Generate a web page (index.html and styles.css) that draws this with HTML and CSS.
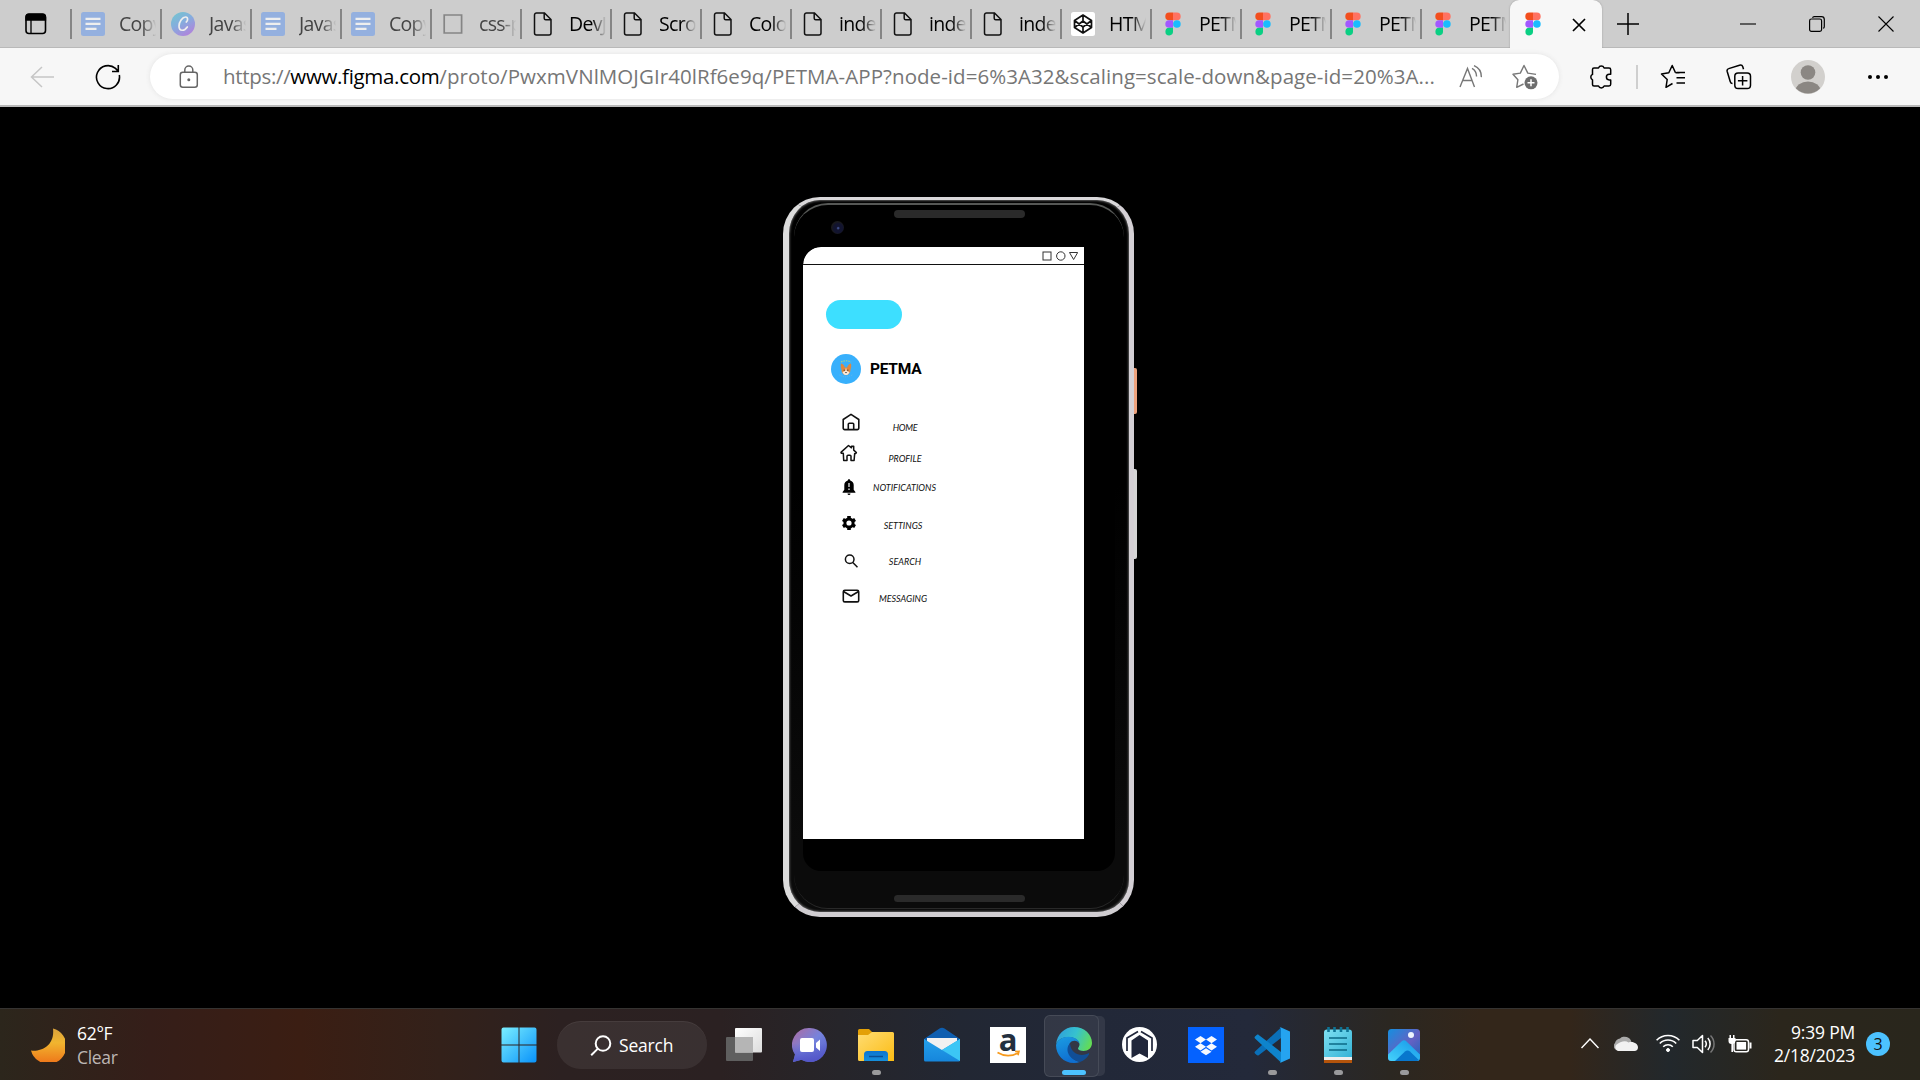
FILE: index.html
```html
<!DOCTYPE html>
<html lang="en">
<head>
<meta charset="utf-8">
<title>PETMA-APP</title>
<link rel="stylesheet" href="styles.css">
</head>
<body>
<svg class="defs" aria-hidden="true">
  <defs>
    <linearGradient id="canvaG" x1="0" y1="0" x2="0.6" y2="1"><stop offset="0" stop-color="#72c8cd"/><stop offset=".5" stop-color="#84aedd"/><stop offset="1" stop-color="#ad86dc"/></linearGradient>
    <linearGradient id="moonG" x1="0" y1="0" x2="0" y2="1"><stop offset="0" stop-color="#d9a23c"/><stop offset=".4" stop-color="#f1b52f"/><stop offset="1" stop-color="#ee7419"/></linearGradient>
    <linearGradient id="winG" gradientUnits="userSpaceOnUse" x1="0" y1="0" x2="35" y2="35"><stop offset="0" stop-color="#7cf0ff"/><stop offset="1" stop-color="#0a93fa"/></linearGradient>
    <linearGradient id="tvG" x1="0" y1="0" x2="1" y2="1"><stop offset="0" stop-color="#fff"/><stop offset="1" stop-color="#dcdcdc"/></linearGradient>
    <linearGradient id="chatG" x1="0" y1="0" x2="1" y2="1"><stop offset="0" stop-color="#b06b9f"/><stop offset=".5" stop-color="#7583dd"/><stop offset="1" stop-color="#4f57c8"/></linearGradient>
    <linearGradient id="chatH" x1="0" y1="0" x2="0" y2="1"><stop offset=".45" stop-color="#5558c9" stop-opacity="0"/><stop offset="1" stop-color="#5355c8"/></linearGradient>
    <linearGradient id="foldG" x1="0" y1="0" x2="1" y2="1"><stop offset="0" stop-color="#ffdc72"/><stop offset="1" stop-color="#fbbc14"/></linearGradient>
    <linearGradient id="foldB" x1="0" y1="0" x2="0" y2="1"><stop offset="0" stop-color="#0c74cf"/><stop offset="1" stop-color="#1690dc"/></linearGradient>
    <linearGradient id="mailG" x1="0" y1="0" x2="0" y2="1"><stop offset="0" stop-color="#24a0ea"/><stop offset="1" stop-color="#1686dc"/></linearGradient>
    <linearGradient id="edgeA" x1="0" y1=".3" x2="1" y2=".6"><stop offset="0" stop-color="#2f9fdb"/><stop offset=".5" stop-color="#36c2cf"/><stop offset="1" stop-color="#63dc55"/></linearGradient>
    <linearGradient id="edgeB" x1="0" y1="0" x2=".3" y2="1"><stop offset="0" stop-color="#1b9de2"/><stop offset="1" stop-color="#0f6fd0"/></linearGradient>
    <linearGradient id="noteG" x1="0" y1="0" x2="1" y2="1"><stop offset="0" stop-color="#7fe0f2"/><stop offset="1" stop-color="#35b3d6"/></linearGradient>
    <linearGradient id="photoG" x1="0" y1="0" x2="1" y2="1"><stop offset="0" stop-color="#148fe0"/><stop offset=".55" stop-color="#6561c2"/><stop offset="1" stop-color="#1665bd"/></linearGradient>
    <linearGradient id="photoM" x1="0" y1="1" x2="1" y2="0"><stop offset="0" stop-color="#45d2fb"/><stop offset="1" stop-color="#1596e8"/></linearGradient>
    <symbol id="doc" viewBox="0 0 24 24"><rect width="24" height="24" rx="2.5" fill="#94b0df"/><path d="M4.500 6.500h15M4.500 11.500h15M4.500 16.500h11" transform="translate(0 .3)" stroke="#eee" stroke-width="2.200"/></symbol>
    <symbol id="canva" viewBox="0 0 24 24"><circle cx="12" cy="12" r="12" fill="url(#canvaG)"/><path d="M15.300 10c1.600-1 2-4.900-.6-5-3.400-.1-6.700 5-6.700 9 0 5.800 5.500 5.200 8.300 1" fill="none" stroke="#eee" stroke-width="1.700" stroke-linecap="round"/></symbol>
    <symbol id="box" viewBox="0 0 24 24"><path d="M3.200 3h17.400v18H3.200z" fill="none" stroke="#858585" stroke-width="1.700"/></symbol>
    <symbol id="page" viewBox="0 0 24 24"><path d="M5.500 1h8l6.500 6.500V21a2 2 0 0 1-2 2H5.500a2 2 0 0 1-2-2V3a2 2 0 0 1 2-2zM13.200 1v5.300a1.500 1.500 0 0 0 1.500 1.500H20" fill="none" stroke="#111" stroke-width="1.500"/></symbol>
    <symbol id="codepen" viewBox="0 0 24 24"><rect width="24" height="24" rx="2.500" fill="#fff"/><path d="M12 3l8.500 5.500v7L12 21l-8.500-5.500v-7zM12 3v6M12 15v6M3.500 8.500L12 15l8.500-6.500M3.500 15.500L12 9l8.500 6.500" fill="none" stroke="#111" stroke-width="1.700" stroke-linejoin="round"/></symbol>
    <symbol id="figma" viewBox="0 0 24 24"><path d="M4.300.6H12v7.600H8.100a3.800 3.800 0 0 1 0-7.600z" fill="#f24e1e"/><path d="M12 .6h3.900a3.800 3.800 0 0 1 0 7.600H12z" fill="#ff7262"/><path d="M12 8.200H8.100a3.800 3.800 0 0 0 0 7.600H12z" fill="#a259ff"/><circle cx="15.900" cy="12" r="3.800" fill="#1abcfe"/><path d="M8.100 15.800H12v3.800a3.800 3.800 0 1 1-3.900-3.800z" fill="#0acf83"/></symbol>
  </defs>
</svg>

<div class="browser">
  <header class="tabstrip">
    <svg class="workspace" viewBox="0 0 22 22"><rect x="1" y="1.500" width="19.500" height="19" rx="3" fill="none" stroke="#000" stroke-width="1.600"/><path d="M1 7V4a3 3 0 0 1 3-3h13.500a3 3 0 0 1 3 3v3zM6 6v14" stroke="#000" stroke-width="1.300"/></svg>
    <nav class="tabs">
      <div class="tab asleep"><svg><use href="#doc"/></svg><span>Copy</span></div>
      <div class="tab asleep"><svg><use href="#canva"/></svg><span>Javas</span></div>
      <div class="tab asleep"><svg><use href="#doc"/></svg><span>Javas</span></div>
      <div class="tab asleep"><svg><use href="#doc"/></svg><span>Copy</span></div>
      <div class="tab asleep"><svg><use href="#box"/></svg><span>css-p</span></div>
      <div class="tab"><svg><use href="#page"/></svg><span>DevJ</span></div>
      <div class="tab"><svg><use href="#page"/></svg><span>Scro</span></div>
      <div class="tab"><svg><use href="#page"/></svg><span>Colo</span></div>
      <div class="tab"><svg><use href="#page"/></svg><span>inde</span></div>
      <div class="tab"><svg><use href="#page"/></svg><span>inde</span></div>
      <div class="tab"><svg><use href="#page"/></svg><span>inde</span></div>
      <div class="tab"><svg><use href="#codepen"/></svg><span>HTM</span></div>
      <div class="tab"><svg><use href="#figma"/></svg><span>PETM</span></div>
      <div class="tab"><svg><use href="#figma"/></svg><span>PETM</span></div>
      <div class="tab"><svg><use href="#figma"/></svg><span>PETM</span></div>
      <div class="tab"><svg><use href="#figma"/></svg><span>PETM</span></div>
      <div class="tab active"><svg><use href="#figma"/></svg><svg class="close" viewBox="0 0 14 14"><path d="M1 1l12 12M13 1L1 13" stroke="#000" stroke-width="1.700"/></svg></div>
    </nav>
    <svg class="newtab" viewBox="0 0 22 22"><path d="M11 0v22M0 11h22" stroke="#000" stroke-width="1.500"/></svg>
    <div class="winbtns">
      <svg viewBox="0 0 16 16"><path d="M0 8h16" stroke="#000" stroke-width="1.100"/></svg>
      <svg viewBox="0 0 16 16"><rect x=".6" y="3" width="12" height="12.300" rx="1.800" fill="none" stroke="#000" stroke-width="1.200"/><path d="M3.500 1.800c.3-.8 1-1.200 1.700-1.200h7.300a2.800 2.800 0 0 1 2.800 2.800v7.200c0 .8-.4 1.500-1 1.800" fill="none" stroke="#000" stroke-width="1.200"/></svg>
      <svg viewBox="0 0 16 16"><path d="M.5.500l15 15M15.500.5l-15 15" stroke="#000" stroke-width="1.100"/></svg>
    </div>
  </header>
  <div class="toolbar">
    <svg class="back" viewBox="0 0 24 22"><path d="M12 1L1.500 11 12 21M1.500 11H24" fill="none" stroke="#c6c6c6" stroke-width="1.500"/></svg>
    <svg class="reload" viewBox="0 0 26 26"><path d="M24.300 11A11.500 11.500 0 1 1 20.500 4.400L23 7M23.300 1v6.500H17" fill="none" stroke="#000" stroke-width="1.600"/></svg>
    <div class="address">
      <svg class="lock" viewBox="0 0 20 24"><rect x="1.300" y="7.300" width="17" height="15" rx="2.500" fill="none" stroke="#666" stroke-width="1.500"/><path d="M5.800 7V5a4 4 0 0 1 8 0v2" fill="none" stroke="#666" stroke-width="1.500"/><circle cx="9.800" cy="14.800" r="1.500" fill="#666"/></svg>
      <div class="url"><span class="host">https://<b>www.figma.com</b></span>/proto/PwxmVNlMOJGIr40lRf6e9q/PETMA-APP?node-id=6%3A32&amp;scaling=scale-down&amp;page-id=20%3A...</div>
      <svg class="read" viewBox="0 0 24 24" fill="none" stroke="#777" stroke-width="1.400"><path d="M1 22L8.500 3.500 15.500 22M3.500 15.500h9.800M13 3.300a9 9 0 0 1 4.500 8.200M15 .6a12 12 0 0 1 7.300 11.500"/></svg>
      <svg class="addfav" viewBox="0 0 26 26"><path d="M11.500 20l-6.800 3.300 1.200-7.600L1 10.200l7.300-1.100L12 1.500l3.800 7.600 8.200 1.300" fill="none" stroke="#777" stroke-width="1.400" stroke-linejoin="round"/><circle cx="19" cy="18.800" r="6.500" fill="#6d6d6d"/><path d="M19 15.300v7M15.500 18.800h7" stroke="#fff" stroke-width="1.500"/></svg>
    </div>
    <div class="tools">
      <svg class="t-puzzle" viewBox="0 0 24 26"><path d="M5 4H9.500a3 3 0 0 1 5.600 0H20a1.700 1.700 0 0 1 1.700 1.700v4.600h-1.500a2.800 2.800 0 0 0 0 5.600h1.500v4.400a1.700 1.700 0 0 1-1.700 1.700h-4.900a3 3 0 0 1-5.600 0H5a1.500 1.500 0 0 1-1.500-1.500v-4.700a3 3 0 0 1 0-5.400V5.500A1.500 1.500 0 0 1 5 4z" fill="none" stroke="#000" stroke-width="1.500" stroke-linejoin="round"/></svg>
      <i class="divider"></i>
      <svg class="t-fav" viewBox="0 0 26 26"><path d="M12.500 19.500L6 23.300l1.200-7.800L1.500 10l7.300-1.200L12.200 1.500l3.300 7.300M15.500 8.800h4M16.500 8.500h8.500M16.500 13.800h8.500M16.500 19h8.500" fill="none" stroke="#000" stroke-width="1.500" stroke-linejoin="round"/></svg>
      <svg class="t-col" viewBox="0 0 26 26"><path d="M6.500 19.500c-1.200 0-1.900-.7-2.200-1.700L1.200 7.500C.8 6 1.300 5 2.700 4.600L13.500 1.200c1.700-.5 2.800.2 3.300 1.500l.7 2.500" fill="none" stroke="#000" stroke-width="1.500"/><rect x="8.800" y="9" width="15.700" height="15.500" rx="3.300" fill="none" stroke="#000" stroke-width="1.500"/><path d="M16.600 12v9.500M11.900 16.800h9.500" stroke="#000" stroke-width="1.500"/></svg>
      <svg class="t-user" viewBox="0 0 34 34"><clipPath id="uc"><circle cx="17" cy="17" r="16.500"/></clipPath><circle cx="17" cy="17" r="17" fill="#d2d0cd"/><circle cx="17" cy="12.500" r="7.300" fill="#8b8783"/><ellipse cx="17" cy="30.500" rx="12.500" ry="9" fill="#8b8783" clip-path="url(#uc)"/></svg>
      <svg class="t-more" viewBox="0 0 22 6"><circle cx="3" cy="3" r="2" /><circle cx="11" cy="3" r="2"/><circle cx="19" cy="3" r="2"/></svg>
    </div>
  </div>
</div>

<main class="stage">
  <div class="phone">
    <i class="side power"></i><i class="side volume"></i>
    <div class="body">
      <i class="rim"></i>
      <i class="speaker top"></i><i class="speaker bottom"></i><i class="camera"></i>
      <div class="glass">
        <div class="screen">
          <div class="status"><svg viewBox="0 0 36 12" fill="none" stroke="#333" stroke-width="1"><rect x="1" y="2" width="8" height="8"/><circle cx="18.800" cy="6" r="4.200"/><path d="M27.500 2.500h8.200l-4.100 7z"/></svg></div>
          <div class="pill"></div>
          <div class="brand">
            <svg viewBox="0 0 30 30"><circle cx="15" cy="15" r="15" fill="#38b0fc"/><path d="M10 8Q15 5.500 20 8" fill="none" stroke="#a4cf8c" stroke-dasharray="1.500 1" stroke-width="1.200"/><path d="M8.500 21Q15 25 22 20.500" fill="none" stroke="#78b9df" stroke-dasharray="1 1" stroke-width=".7"/><path d="M10 9.600c2.200.6 3.300 2 3.900 4h2.200c.6-2 1.700-3.400 3.900-4 .5 2.200.2 4.500-.6 6.200.3 3-2 5.400-4.400 5.400s-4.700-2.400-4.400-5.400c-.8-1.700-1.100-4-.6-6.200z" fill="#df883f"/><path d="M15 13.500l.8 3.500 2.700 1c-.5 2.100-2 3.100-3.500 3.100s-3-1-3.500-3.100l2.700-1z" fill="#f8eadc"/><path d="M12.700 16.200h1M16.300 16.200h1M14.300 18.600h1.400" stroke="#332a26" stroke-width="1"/></svg>
            <span>PETMA</span>
          </div>
          <ul class="menu">
            <li class="m-home"><svg viewBox="0 0 18 18" fill="none" stroke="#111" stroke-width="1.600" stroke-linejoin="round"><path d="M1.200 6.500L9 1.300l7.800 5.200v8.600a1.500 1.500 0 0 1-1.500 1.500H2.700a1.500 1.500 0 0 1-1.500-1.500zM6.300 16.500v-5.300a1 1 0 0 1 1-1h3.400a1 1 0 0 1 1 1v5.300"/></svg><span>HOME</span></li>
            <li class="m-profile"><svg viewBox="0 0 18 18" fill="none" stroke="#111" stroke-width="1.500" stroke-linejoin="round"><path d="M3.300 9.300H1.600a.7.700 0 0 1-.4-1.200L8.500 1.500l3 2.300V2.300h2.200v3.800l2.700 2.400-.5.900h-1.200l-.6 7H11v-4.200a1 1 0 0 0-1-1H8a1 1 0 0 0-1 1v4.200H3.700z"/></svg><span>PROFILE</span></li>
            <li class="m-notifications"><svg viewBox="0 0 18 18"><path d="M9 1.200c.8 0 1.200.5 1.200 1.200 2.300.6 3.500 2.500 3.500 4.700v4.700l1.700 2.200v.8H2.600V14l1.700-2.200V7.100c0-2.200 1.200-4.100 3.500-4.700 0-.7.400-1.200 1.200-1.200zM7.500 15.500h3A1.500 1.500 0 0 1 9 17a1.500 1.500 0 0 1-1.500-1.500z"/><path d="M9 5v4M9 10.500v1.500" stroke="#fff" stroke-width="1.200"/></svg><span>NOTIFICATIONS</span></li>
            <li class="m-settings"><svg viewBox="0 0 18 18"><circle cx="9" cy="9" r="4.100" fill="none" stroke="#000" stroke-width="3"/><path d="M9 2v3M9 13v3M2.900 5.500l2.600 1.500M12.500 11l2.600 1.500M15.100 5.500L12.500 7M5.500 11l-2.600 1.500" stroke="#000" stroke-width="3.600"/></svg><span>SETTINGS</span></li>
            <li class="m-search"><svg viewBox="0 0 18 18" fill="none" stroke="#111" stroke-width="1.500"><circle cx="7.700" cy="7.300" r="4.300"/><path d="M10.800 10.500l4.700 4.700"/></svg><span>SEARCH</span></li>
            <li class="m-messaging"><svg viewBox="0 0 18 18" fill="none" stroke="#111" stroke-width="1.600" stroke-linejoin="round"><rect x="1.300" y="3.300" width="15.400" height="11.600" rx="1.500"/><path d="M1.500 4.500L9 9l7.500-4.500"/></svg><span>MESSAGING</span></li>
          </ul>
        </div>
      </div>
    </div>
  </div>
</main>

<footer class="taskbar">
  <div class="weather">
    <svg viewBox="0 0 34 34"><path d="M22 0.500a18 18 0 1 1-22 22c10 1.500 24-4.500 22-22z" fill="url(#moonG)"/></svg>
    <div><p>62°F</p><p class="dim">Clear</p></div>
  </div>
  <div class="apps">
    <div class="app start"><svg viewBox="0 0 36 36"><path d="M.5 2.500a2 2 0 0 1 2-2h15v17H.500zM18.500.5h15a2 2 0 0 1 2 2v15h-17zM.5 18.500h17v17h-15a2 2 0 0 1-2-2zM18.500 18.500h17v15a2 2 0 0 1-2 2h-15z" fill="url(#winG)"/></svg></div>
    <div class="search"><svg viewBox="0 0 22 22" fill="none" stroke="#fff" stroke-width="2"><circle cx="13" cy="8.500" r="7.300"/><path d="M7.600 13.900L1.200 20.300"/></svg><span>Search</span></div>
    <div class="app"><svg viewBox="0 0 36 36"><rect y="10" width="27" height="24" rx="1" fill="#5f5f5f"/><rect x="9" y="1" width="27" height="24.500" rx="1" fill="url(#tvG)"/><path d="M9 10h18v15.500H9z" fill="#b5b5b5"/></svg></div>
    <div class="app"><svg viewBox="0 0 36 36"><path d="M18 1a17 17 0 1 1-8.500 31.800L1 35l2-7.500A17 17 0 0 1 18 1z" fill="url(#chatG)"/><path d="M18 1a17 17 0 1 1-8.500 31.800L1 35l2-7.500A17 17 0 0 1 18 1z" fill="url(#chatH)"/><rect x="8" y="11" width="14" height="14" rx="2" fill="#fff"/><path d="M24 16l4-3.500v11.500L24 20.500z" fill="#fff"/></svg></div>
    <div class="app run"><svg viewBox="0 0 36 36"><path d="M0 8V3.500A1.500 1.500 0 0 1 1.500 2H11l4 4v4z" fill="#e3a007"/><path d="M0 8h10l4-3h20.500A1.500 1.500 0 0 1 36 6.500V34H1.500A1.500 1.500 0 0 1 0 32.500z" fill="url(#foldG)"/><path d="M6 34v-6.500A3.500 3.500 0 0 1 9.500 24h17a3.500 3.500 0 0 1 3.500 3.500V34z" fill="url(#foldB)"/><path d="M11 29.500h14" stroke="#0b4f94" stroke-width="1.500"/></svg></div>
    <div class="app"><svg viewBox="0 0 36 36"><path d="M0 12L15.500 1.500q2.500-1.500 5 0L36 12v8H0z" fill="#0e5eb0"/><path d="M3 11h30v8L18 26 3 19z" fill="#f1f1f1"/><path d="M0 12l18 11L36 12v21a1.500 1.500 0 0 1-1.500 1.500h-33A1.500 1.500 0 0 1 0 33z" fill="url(#mailG)"/><path d="M36 12L18 23l18 11z" fill="#3cc6f5"/></svg></div>
    <div class="app"><svg viewBox="0 0 36 36"><path d="M0 0h36v36H0z" fill="#fff"/><text x="18" y="23.500" text-anchor="middle" class="amz" fill="#232f3e">a</text><path d="M7.500 25.500q10 6 20.500.5M25 24.500l4-.2-1 4" fill="none" stroke="#f79a1c" stroke-width="1.600"/></svg></div>
    <div class="app tile"><svg viewBox="0 0 36 36"><path d="M0 17.500C1 7.500 8.500 0 18 0c10.500 0 18 7.500 18 16 0 5-4 8-8.500 8-3 0-5.500-1-5.500-2.500 0-1 1.500-2 1.500-4C23.500 13 18 10 12.500 10 6.500 10 1.500 13 0 17.500z" fill="url(#edgeA)"/><path d="M0 18C1.500 13 6.500 9.800 12.500 9.800c6 0 10.500 3 11 7-1-2-3-3-5-3-4 0-6 3.500-6 7C12.500 28 17.500 34 24 35a18 18 0 0 1-6 1C7.500 36 0 28 0 18z" fill="url(#edgeB)"/><path d="M14 16.500C9 21 11 32 24 35c4-1.500 7-4 9-7.500.5-1-.3-1.500-1-1-6 3.200-17 1.500-18-10z" fill="#114e96"/></svg></div>
    <div class="app"><svg viewBox="0 0 36 36"><circle cx="17.500" cy="17.500" r="17.500" fill="#fff"/><path d="M9.500 31V13.500L17.500 8l8.500 5.500V31l-8.500-4.500z" fill="#20263a"/><path d="M5 24V11l11-6.500M30 24V11L19 4.500" fill="none" stroke="#20263a" stroke-width="1.700"/></svg></div>
    <div class="app"><svg viewBox="0 0 36 36"><path d="M0 0h36v36H0z" fill="#0462ff"/><path d="M12.500 9l5.500 3.600-5.500 3.600L7 12.600zM23.500 9l5.500 3.600-5.500 3.600-5.500-3.600zM12.500 16.200l5.500 3.600-5.500 3.600L7 19.800zM23.500 16.200l5.500 3.600-5.500 3.600-5.500-3.600zM18 21.200l5.500 3.500L18 28.300l-5.500-3.600z" fill="#f5f9ff"/></svg></div>
    <div class="app run"><svg viewBox="0 0 36 36"><path d="M1 24.500a1.500 1.500 0 0 0 0 2l1.700 1.600c.6.500 1.500.5 2 .1L27 11V.5z" fill="#0a6fb8"/><path d="M1 11.500a1.500 1.500 0 0 1 0-2L2.700 8c.6-.5 1.500-.5 2-.1L27 25v10.500z" fill="#0e84cc"/><path d="M26.500.3L36 4.500v27l-9.500 4.200c-.8.300-1.600 0-1.600 0 1.200.3 2-.5 2-1.700V2c0-1.200-.8-2-2-1.700 0 0 .8-.3 1.600 0z" fill="#25a4f0"/></svg></div>
    <div class="app run"><svg viewBox="0 0 36 36"><path d="M4 30h28v6H4z" fill="#b4540b"/><path d="M4 28h28v5H4z" fill="#eee"/><path d="M4 5.500A3 3 0 0 1 7 2.500h22a3 3 0 0 1 3 3V30H4z" fill="url(#noteG)"/><path d="M9 11h18M9 17h18M9 23h18" stroke="#0b6a86" stroke-width="1.600"/><path d="M8.500 0v5M14.500 0v5M21 0v5M27.500 0v5" stroke="#0d7496" stroke-width="2.600"/></svg></div>
    <div class="app run"><svg viewBox="0 0 36 36"><rect x="2" y="2" width="32" height="32" rx="3.500" fill="url(#photoG)"/><path d="M2 27.500L15.500 14.500q2.500-2.300 5 0L34 27.500v3a3.500 3.500 0 0 1-3.500 3.500h-25A3.500 3.500 0 0 1 2 30.500z" fill="url(#photoM)"/><path d="M9 34l10-9.500q2.500-2 5 0l8.800 8.500c-.7.700-1.500 1-2.300 1z" fill="#0877cd"/><circle cx="25" cy="8" r="3" fill="#eef4fd"/></svg></div>
  </div>
  <div class="tray">
    <svg class="chev" viewBox="0 0 18 11"><path d="M.5 10L9 1l8.500 9" fill="none" stroke="#fff" stroke-width="1.400"/></svg>
    <svg class="cloud" viewBox="0 0 24 18"><path d="M5 16.500A4.500 4.500 0 0 1 1 9a6 6 0 0 1 5-4.500 7 7 0 0 1 11.500 3.500L12 17z" fill="#aaa"/><path d="M4 17a4 4 0 0 1-2-6c4-3 9-5 12.500-2.500C19 7 24 9.500 24 13.500A3.700 3.700 0 0 1 20.500 17z" fill="#f2f2f2"/></svg>
    <svg class="wifi" viewBox="0 0 24 18" fill="none" stroke="#fff" stroke-width="1.600"><path d="M.6 6.200a16 16 0 0 1 22.800 0M3.800 9.500a11.500 11.500 0 0 1 16.400 0M7.200 12.700a6.800 6.800 0 0 1 9.600 0"/><circle cx="12" cy="16" r="1.500" fill="#fff" stroke-width="1"/></svg>
    <svg class="sound" viewBox="0 0 24 20" fill="none" stroke="#fff" stroke-width="1.500"><path d="M1 6.500h4.300L10.500 1.500v17L5.300 13.500H1z" stroke-linejoin="round"/><path d="M13 6.800a5 5 0 0 1 0 6.400M15.800 4a9 9 0 0 1 0 12"/><path d="M18.500 1.500a12 12 0 0 1 0 17" stroke="#777"/></svg>
    <svg class="battery" viewBox="0 0 24 20"><rect x="6" y="5.800" width="14.500" height="12" rx="2.300" fill="none" stroke="#fff" stroke-width="1.500"/><rect x="8.500" y="8" width="9.600" height="7.600" fill="#fff"/><path d="M22.500 8.500v6" stroke="#fff" stroke-width="2"/><path d="M.5 4h7v3a3 3 0 0 1-2.500 3v8H3.400v-8A3 3 0 0 1 .5 7zM1.500 1h1.500v3H1.500zM5 1h1.500v3H5z" fill="#fff"/></svg>
    <div class="clock"><p>9:39 PM</p><p>2/18/2023</p></div>
    <span class="badge">3</span>
  </div>
</footer>
</body>
</html>
```

FILE: styles.css
```css
* { box-sizing: border-box; margin: 0; padding: 0; }
body { width: 1920px; height: 1080px; overflow: hidden; display: flex; flex-direction: column; background: #000; font-family: "Open Sans", "Noto Sans", sans-serif; }
svg { display: block; flex: none; }
.defs { position: absolute; width: 0; height: 0; }

/* Browser chrome */
.browser { flex: none; height: 107px; background: #f7f7f7; border-bottom: 2px solid #b9b9b9; }
.tabstrip { height: 48px; display: flex; align-items: center; background: #cdcdcd; box-shadow: inset 0 -1px #b9b9b9; padding-left: 25px; }
.workspace { width: 22px; height: 22px; margin-right: 23px; }
.tabs { display: flex; height: 48px; align-items: center; }
.tab { width: 90px; height: 30px; border-left: 2px solid #858585; padding-left: 9px; display: flex; align-items: center; gap: 14px; }
.tab svg { width: 24px; height: 24px; }
.tab span { width: 38px; overflow: hidden; white-space: nowrap; font-size: 19.5px; line-height: 30px; letter-spacing: -0.7px; color: #000; -webkit-mask-image: linear-gradient(90deg, #000 60%, transparent 98%); mask-image: linear-gradient(90deg, #000 60%, transparent 98%); }
.tab.asleep span { color: #444; }
.tab.active { width: 92px; height: 48px; border: 0; border-radius: 9px 9px 0 0; background: #f7f7f7; padding-left: 11px; gap: 27px; box-shadow: 0 0 2px #999; clip-path: inset(0 -3px 0 -3px); }
.tab.active .close { width: 14px; height: 14px; margin-top: 1px; }
.newtab { width: 22px; height: 22px; margin-left: 15px; }
.winbtns { margin-left: auto; margin-right: 26px; display: flex; gap: 53px; }
.winbtns svg { width: 16px; height: 16px; }

.toolbar { height: 57px; display: flex; align-items: center; padding-left: 30px; }
.back { width: 24px; height: 22px; }
.reload { width: 26px; height: 26px; margin-left: 41px; }
.address { width: 1409px; height: 45px; margin-left: 29px; border-radius: 23px; background: #fff; box-shadow: 0 0 5px #e2e2e2; display: flex; align-items: center; padding-left: 29px; }
.lock { width: 20px; height: 24px; }
.url { width: 1213px; margin: -2px 0 0 24px; font-size: 20.5px; line-height: 30px; white-space: nowrap; color: #767676; letter-spacing: 0.06px; }
.host { letter-spacing: -0.32px; }
.url b { font-weight: 400; color: #000; }
.read { width: 24px; height: 24px; margin-left: 23px; }
.addfav { width: 26px; height: 26px; margin-left: 29px; }
.tools { display: flex; align-items: center; }
.t-puzzle { width: 24px; height: 26px; margin-left: 30px; }
.divider { width: 2px; height: 24px; background: #cfcfcf; margin-left: 23px; }
.t-fav { width: 26px; height: 26px; margin-left: 22px; }
.t-col { width: 26px; height: 26px; margin-left: 40px; }
.t-user { width: 34px; height: 34px; margin-left: 39px; }
.t-more { width: 22px; height: 6px; margin-left: 42px; }

/* Phone mockup */
.stage { flex: 1; display: flex; justify-content: center; padding: 90px 2px 0 0; background: #000; }
.phone { position: relative; width: 352px; height: 720px; }
.side { position: absolute; z-index: 1; right: -2px; width: 3px; border-radius: 0 2px 2px 0; }
.power { top: 171px; height: 46px; background: #eda27d; }
.volume { top: 272px; height: 90px; background: #d5d5d5; }
.body { position: relative; width: 351px; height: 720px; border-style: solid; border-color: #d9d8da #d4d0d5 #d0cdd1 #dcdcdc; border-width: 3px 5px 5px 6px; border-radius: 37px; background: linear-gradient(#000 40%, #0b0b0b 90%); padding: 47px 14px 41px; box-shadow: inset 0 0 2px 1px #555; }
.rim { position: absolute; inset: 3px 5px 3px 5px; border-radius: 34px; border-top: 2px solid #565856; border-bottom: 1px solid #292929; }
.speaker { position: absolute; left: 105px; width: 131px; border-radius: 4px; background: #2a2a2a; }
.speaker.top { top: 10px; height: 8px; }
.speaker.bottom { bottom: 10px; height: 7px; }
.camera { position: absolute; left: 42px; top: 21px; width: 13px; height: 13px; border-radius: 50%; background: radial-gradient(circle at 55% 55%, #3e4c86 0 6%, #12142f 18% 45%, #1a1a1c 62%); }
.glass { position: relative; width: 312px; height: 624px; border-radius: 18px; background: #000; overflow: hidden; }
.screen { width: 281px; height: 592px; background: #fff; border-radius: 18px 0 0 0; }
.status { height: 18px; border-bottom: 1px solid #111; display: flex; justify-content: flex-end; padding: 3px 6px 0 0; }
.status svg { width: 36px; height: 12px; }
.pill { width: 76px; height: 29px; margin: 35px 0 0 22.5px; border-radius: 15px; background: #3ddfff; }
.brand { display: flex; align-items: center; gap: 9px; margin: 25px 0 0 28px; font: 700 15.5px/30px Roboto, sans-serif; letter-spacing: -0.25px; color: #000; }
.brand svg { width: 30px; height: 30px; }
.menu { list-style: none; padding: 29px 0 0 35px; }
.menu li { display: grid; grid-template-columns: 22px 90px; align-items: center; height: 18px; margin-bottom: 13px; }
.menu svg { width: 18px; height: 18px; margin-left: 3.5px; }
.menu span { position: relative; text-align: center; font: italic 400 9px/18px Lato, sans-serif; color: #111; }
.menu .m-home span { top: 6px; letter-spacing: -0.3px; }
.menu .m-profile span { top: 6px; }
.menu .m-profile svg { margin-left: 1.5px; }
.menu .m-profile { margin-bottom: 16px; }
.menu .m-notifications span { top: 1px; left: -0.5px; }
.menu .m-notifications svg, .menu .m-settings svg { margin-left: 2px; }
.menu .m-notifications { margin-bottom: 18px; }
.menu .m-settings span { top: 3px; left: -2px; }
.menu .m-settings { margin-bottom: 20px; }
.menu .m-search { margin-bottom: 17px; }
.menu .m-search span { top: 1px; }
.menu .m-messaging span { top: 3px; left: -2px; }

/* Taskbar */
.taskbar { flex: none; height: 72px; display: flex; align-items: flex-start; color: #fff; border-top: 1px solid #353331; background: linear-gradient(90deg, #2c261c 0, #351e19 150px, #3b1e13 300px, #33211a 440px, #2c2121 560px, #2b2122 720px, #26252a 840px, #222733 960px, #222838 1100px, #23293a 1250px, #2b2721 1390px, #33261a 1480px, #33261a 1570px, #22282c 1670px, #2b261c 1780px, #29261c 1920px); }
.weather { width: 470px; padding: 12px 0 0 31px; display: flex; gap: 12px; font-size: 17.5px; line-height: 24px; letter-spacing: -0.3px; }
.weather svg { width: 34px; height: 34px; margin-top: 7px; }
.dim { color: #bdb6b3; }
.apps { display: flex; width: 1084px; }
.app { position: relative; width: 66px; height: 71px; padding: 18px 15px 0; }
.app svg { width: 36px; height: 36px; position: relative; }
.app.start { width: 87px; padding-left: 30.5px; }
.app.run::after, .tile::after { content: ""; position: absolute; bottom: 5px; left: 29px; width: 9px; height: 5px; border-radius: 3px; background: #9a9a9c; }
.tile::before { content: ""; position: absolute; left: 3px; top: 6px; width: 53px; height: 60px; border-radius: 6px; background: #ffffff14; border: 1px solid #ffffff18; box-shadow: 7px 0 0 -1px #ffffff14; }
.app.tile::after { left: 21px; width: 24px; background: #4cc2ff; }
.amz { font: 700 31px "Open Sans", sans-serif; }
.search { width: 150px; height: 48px; margin: 12px 4px 0 0; border-radius: 24px; background: #ffffff12; border-top: 1px solid #ffffff10; display: flex; align-items: center; padding-left: 33px; gap: 7px; font-size: 17.5px; letter-spacing: -0.2px; }
.search svg { width: 22px; height: 22px; }
.search span { margin-top: -1px; }
.tray { display: flex; align-items: flex-start; margin-left: 27px; }
.chev { width: 18px; height: 11px; margin-top: 29px; }
.cloud { width: 24px; height: 18px; margin: 25px 0 0 15px; }
.wifi { width: 24px; height: 18px; margin: 25px 0 0 18px; }
.sound { width: 24px; height: 20px; margin: 25px 0 0 12px; }
.battery { width: 24px; height: 20px; margin: 25px 0 0 12px; }
.clock { width: 103px; padding-top: 12px; text-align: right; font-size: 17.5px; line-height: 23px; letter-spacing: -0.2px; }
.badge { width: 24px; height: 24px; margin: 23px 0 0 11px; border-radius: 50%; background: #4cc2ff; color: #111; text-align: center; font-size: 16px; line-height: 24px; }
```
